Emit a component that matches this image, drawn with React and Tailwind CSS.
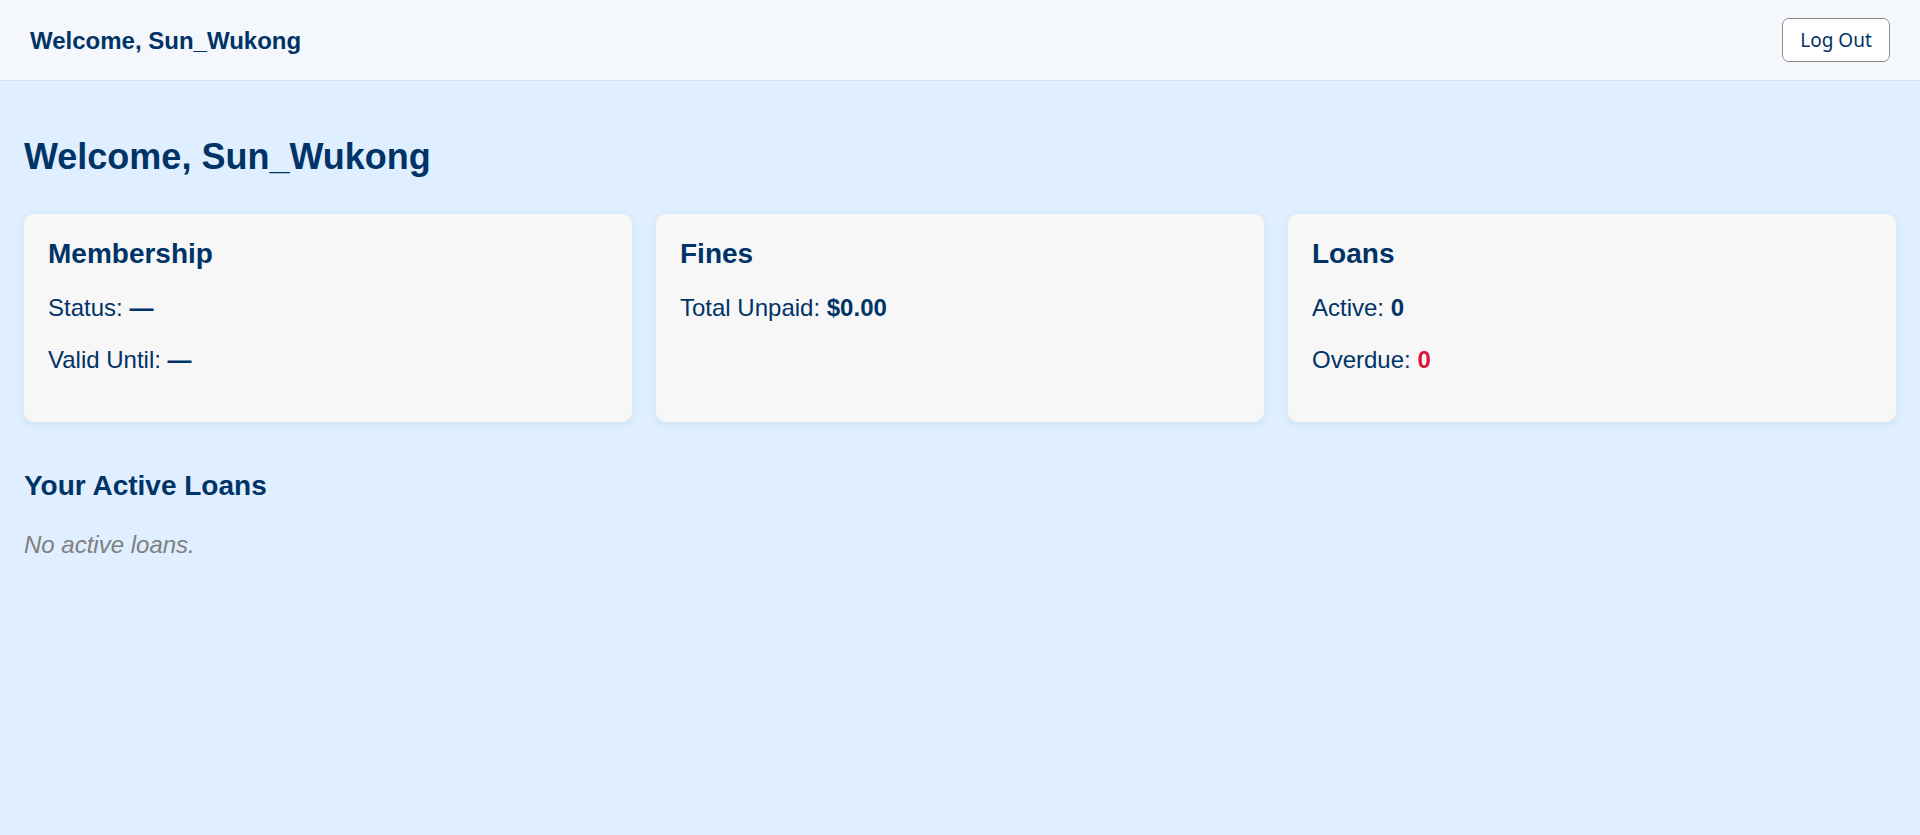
import { useState } from 'react';

const summary = [
  {
    title: 'Membership',
    rows: [
      { label: 'Status:', value: '—' },
      { label: 'Valid Until:', value: '—' },
    ],
  },
  {
    title: 'Fines',
    rows: [{ label: 'Total Unpaid:', value: '$0.00' }],
  },
  {
    title: 'Loans',
    rows: [
      { label: 'Active:', value: '0' },
      { label: 'Overdue:', value: '0', danger: true },
    ],
  },
];

function Card({ title, rows }) {
  return (
    <div className="bg-[#f7f7f7] rounded-[10px] p-6 shadow-[0_2px_8px_rgba(40,80,140,0.10)]">
      <h3 className="text-[28px] leading-[32px] font-bold mb-6">{title}</h3>
      {rows.map((r) => (
        <p key={r.label} className="text-[24px] leading-[28px] mb-6">
          {r.label}{' '}
          <strong className={r.danger ? 'font-bold text-[#dc143c]' : 'font-bold'}>{r.value}</strong>
        </p>
      ))}
    </div>
  );
}

export default function App() {
  const [user] = useState('Sun_Wukong');
  const [loans] = useState([]);

  return (
    <div className="min-h-screen bg-[#dfefff] text-[#003366] font-['Liberation_Sans',Arial,sans-serif]">
      <header className="h-[81px] bg-[#f4f8fc] border-b border-[#d6e3ef] px-[30px] flex items-center justify-between">
        <div className="text-[24px] leading-[28px] font-bold pt-[2px]">Welcome, {user}</div>
        <button
          type="button"
          className="w-[108px] h-[44px] bg-white border border-[#8a8a8a] rounded-[7px] text-[19px] text-[#003366] font-['Noto_Sans',sans-serif] flex items-center justify-center"
        >
          Log Out
        </button>
      </header>

      <main className="px-6 pt-[55px]">
        <h1 className="text-[36px] leading-[41px] font-bold mb-[37px]">Welcome, {user}</h1>

        <div className="grid grid-cols-3 gap-6">
          {summary.map((c) => (
            <Card key={c.title} {...c} />
          ))}
        </div>

        <h2 className="text-[28px] leading-[32px] font-bold mt-[48px] mb-[29px]">Your Active Loans</h2>
        {loans.length === 0 && (
          <p className="text-[24px] leading-[28px] italic text-[#808080]">No active loans.</p>
        )}
      </main>
    </div>
  );
}
